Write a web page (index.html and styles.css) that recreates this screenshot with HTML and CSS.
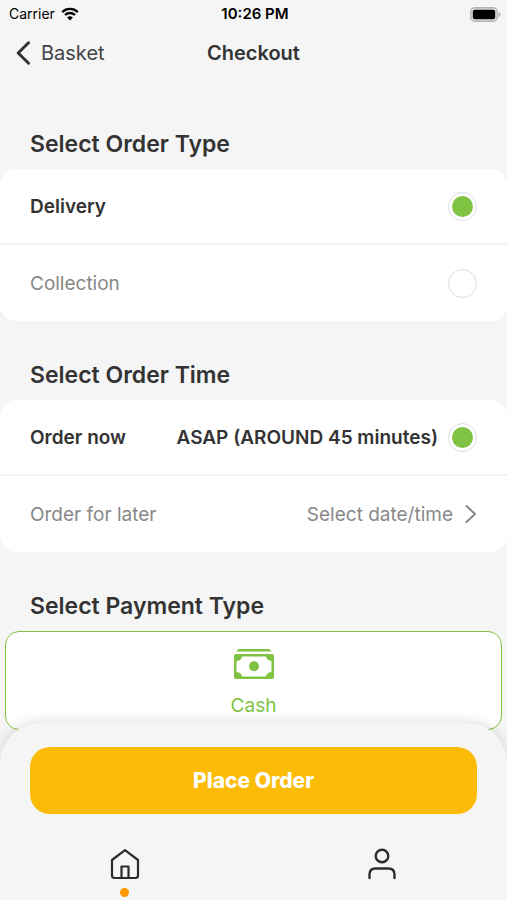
FILE: index.html
```html
<!DOCTYPE html>
<html lang="en">
<head>
<meta charset="utf-8">
<meta name="viewport" content="width=device-width, initial-scale=1">
<title>Checkout</title>
<link rel="stylesheet" href="styles.css">
</head>
<body>
<div class="status">
  <div class="status-carrier">
    <span>Carrier</span>
    <svg width="18" height="14" viewBox="0 0 18 14" aria-hidden="true">
      <path d="M1.2 5.1a11.2 11.2 0 0 1 15.6 0M4 8a7.2 7.2 0 0 1 10 0" fill="none" stroke="#000" stroke-width="2.3"/>
      <path d="M9 13.6 6.1 10.6a4.2 4.2 0 0 1 5.8 0z" fill="#000"/>
    </svg>
  </div>
  <span class="status-time">10:26 PM</span>
  <svg class="status-battery" width="31" height="15" viewBox="0 0 31 15" aria-hidden="true">
    <rect x=".8" y=".8" width="26.4" height="13.4" rx="4" fill="#ddd" stroke="#b4b4b4" stroke-width="1.4"/>
    <rect x="2.8" y="2.8" width="22.4" height="9.4" rx="2" fill="#000"/>
    <path d="M28.6 5v5q2-1 2-2.500t-2-2.500z" fill="#aaa"/>
  </svg>
</div>
<header class="nav">
  <a class="back" href="#basket">
    <svg width="15" height="24" viewBox="0 0 15 24" aria-hidden="true"><path d="M12.500 1.800 2.200 12l10.300 10.200" fill="none" stroke="#333" stroke-width="3" stroke-linecap="round" stroke-linejoin="round"/></svg>
    <span>Basket</span>
  </a>
  <h1 class="title">Checkout</h1>
</header>
<main class="content">
  <section>
    <h2 class="heading" id="type">Select Order Type</h2>
    <div class="card" role="radiogroup" aria-labelledby="type">
      <label class="row row-active"><span class="name">Delivery</span><input class="radio" type="radio" name="type" checked></label>
      <label class="row"><span class="name">Collection</span><input class="radio" type="radio" name="type"></label>
    </div>
  </section>
  <section>
    <h2 class="heading">Select Order Time</h2>
    <div class="card">
      <label class="row row-active"><span class="name">Order now</span><span>ASAP (AROUND 45 minutes)</span><input class="radio" type="radio" name="time" checked></label>
      <button class="row" type="button"><span class="name">Order for later</span><span>Select date/time</span>
        <svg width="14" height="20" viewBox="0 0 14 20" aria-hidden="true"><path d="M3.500 2 12 10l-8.500 8" fill="none" stroke="#888" stroke-width="2" stroke-linecap="round" stroke-linejoin="round"/></svg>
      </button>
    </div>
  </section>
  <section>
    <h2 class="heading">Select Payment Type</h2>
    <button class="payment" type="button" aria-pressed="true">
      <svg width="40" height="30" viewBox="0 0 40 30" aria-hidden="true">
        <path d="M2.500 2.400Q3.500 0 5.500 0h29q2 0 3 2.400z" fill="#80c342"/>
        <path fill-rule="evenodd" d="M2 5h36q2 0 2 2v21q0 2-2 2H2q-2 0-2-2V7q0-2 2-2zM8 7.500Q7.500 11.500 2.500 12v11q5 .5 5.500 4.500h24q.5-4 5.500-4.500V12q-5-.5-5.500-4.500z" fill="#80c342"/>
        <circle cx="20" cy="17.300" r="5" fill="#80c342"/>
      </svg>
      <span>Cash</span>
    </button>
  </section>
</main>
<footer class="sheet">
  <button class="order" type="button">Place Order</button>
  <nav class="tabs">
    <a class="tab" href="#home" aria-label="Home" aria-current="page">
      <svg width="30" height="32" viewBox="0 0 30 32" fill="none" stroke="#2b2b2b" stroke-width="2.200" stroke-linejoin="round" aria-hidden="true"><path d="M15 2.200 2 12v15.500q0 2.500 2.500 2.500h21q2.500 0 2.500-2.500V12zM11.500 30V18.500h7V30"/></svg>
      <span class="dot"></span>
    </a>
    <a class="tab" href="#account" aria-label="Account">
      <svg width="30" height="32" viewBox="0 0 30 32" fill="none" stroke="#2b2b2b" stroke-width="2.400" stroke-linecap="round" aria-hidden="true"><circle cx="15" cy="8" r="6.300"/><path d="M2.500 30v-3.500q0-6 6-6h13q6 0 6 6V30"/></svg>
    </a>
  </nav>
</footer>
</body>
</html>
```
FILE: styles.css
```css
* { box-sizing: border-box; }
body {
  margin: 0;
  min-height: 100vh;
  background: #f5f5f5;
  color: #333;
  font-family: Inter, "Liberation Sans", sans-serif;
  font-size: 19px;
  line-height: 24px;
}
button {
  border: 0;
  background: none;
  font: inherit;
  text-align: left;
  cursor: pointer;
}
a { color: inherit; text-decoration: none; }
svg { display: block; flex: none; }

.status, .nav {
  display: grid;
  grid-template-columns: 1fr auto 1fr;
  align-items: center;
}
.status {
  height: 28px;
  padding: 0 6px 0 9px;
  color: #000;
  font-size: 14px;
}
.status-carrier { display: flex; align-items: center; gap: 6px; }
.status-time { font-size: 15px; font-weight: 600; }
.status-battery { justify-self: end; }

.nav {
  height: 50px;
  padding: 0 16px;
}
.back { display: flex; align-items: center; gap: 10px; font-size: 20px; color: #444; }
.title { margin: 0; font-size: 20px; font-weight: 600; }

.content { padding: 12px 0 176px; }
.heading {
  margin: 0;
  padding: 38px 30px 9px;
  font-size: 23px;
  font-weight: 600;
  line-height: 32px;
}
.card {
  overflow: hidden;
  border-radius: 16px;
  background: #fff;
}
.row {
  display: flex;
  align-items: center;
  gap: 10px;
  width: 100%;
  height: 76px;
  padding: 0 30px;
  color: #888;
}
.row:first-child { border-bottom: 2px solid #f3f3f3; }
.row span { padding-top: 2px; }
.row-active { color: #333; font-weight: 600; }
.name { flex: 1; }
.radio {
  appearance: none;
  flex: none;
  width: 29px;
  height: 29px;
  margin: 0;
  padding: 3px;
  border: 1px solid #ddd;
  border-radius: 50%;
}
.radio:checked { background: #80c342 content-box; }
.payment {
  display: flex;
  flex-direction: column;
  align-items: center;
  gap: 15px;
  width: calc(100% - 10px);
  height: 99px;
  margin: 0 5px;
  padding: 17px 0 0;
  border: 1px solid #80c342;
  border-radius: 14px;
  background: #fff;
  color: #80c342;
}

.sheet {
  position: fixed;
  right: 0;
  bottom: 0;
  left: 0;
  padding: 24px 30px 0;
  border-radius: 40px 40px 0 0;
  background: #f5f5f5;
  box-shadow: 0 -2px 12px rgba(0, 0, 0, 0.13);
}
.order {
  display: block;
  width: 100%;
  height: 67px;
  border-radius: 20px;
  background: #fbbb07;
  color: #fff;
  font-size: 21px;
  font-weight: 800;
  text-align: center;
}
.tabs {
  display: flex;
  height: 86px;
  margin: 0 -34px;
}
.tab {
  display: flex;
  flex: 1;
  flex-direction: column;
  align-items: center;
  gap: 8px;
  padding-top: 34px;
}
.dot { width: 9px; height: 9px; border-radius: 50%; background: #ff9800; }
```
